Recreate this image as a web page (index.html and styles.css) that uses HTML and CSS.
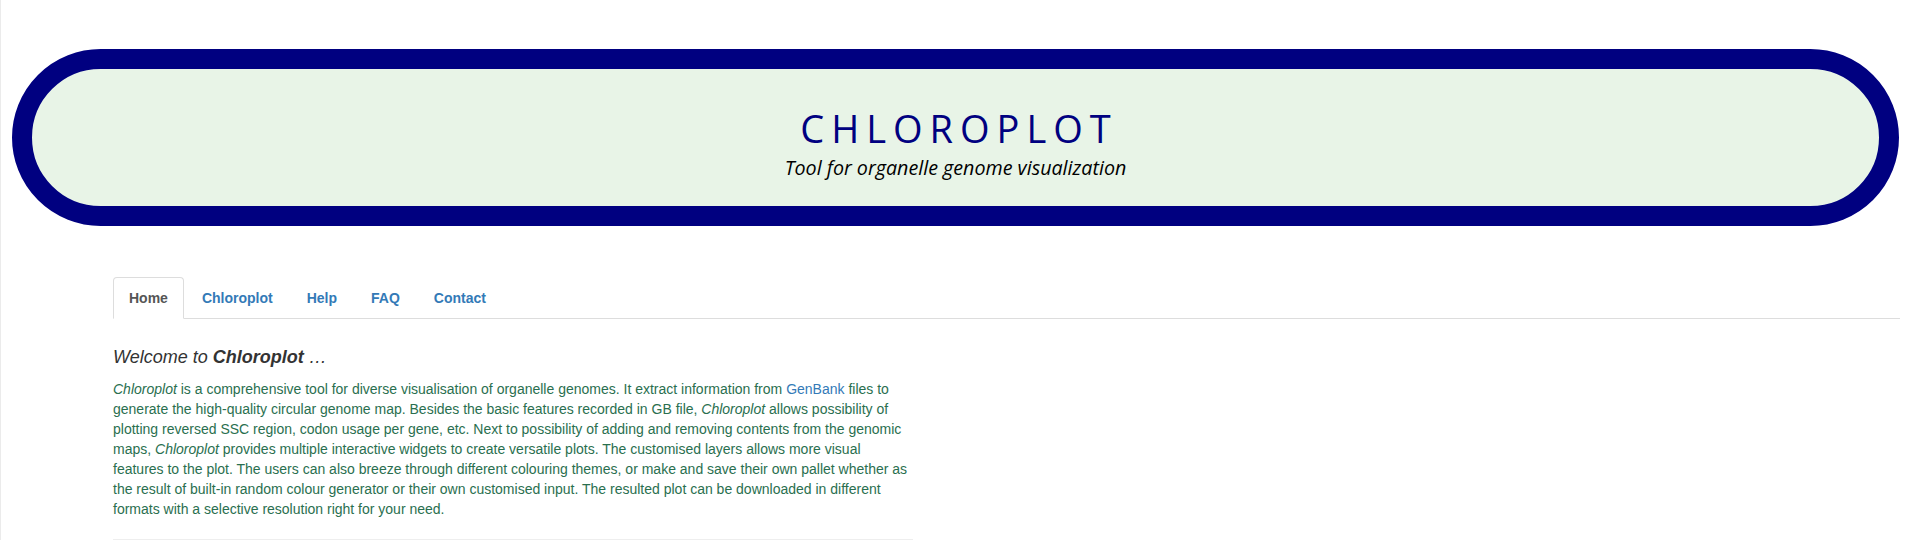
FILE: index.html
```html
<!DOCTYPE html>
<html lang="en">
<head>
<meta charset="utf-8">
<title>Chloroplot</title>
<link rel="stylesheet" href="styles.css">
</head>
<body>
<div class="page">
  <header class="banner-wrap">
    <div class="banner">
      <h1 class="title">CHLOROPLOT</h1>
      <p class="subtitle">Tool for organelle genome visualization</p>
    </div>
  </header>
  <div class="main">
    <ul class="nav-tabs">
      <li class="tab active"><a href="#">Home</a></li>
      <li class="tab"><a href="#">Chloroplot</a></li>
      <li class="tab"><a href="#">Help</a></li>
      <li class="tab"><a href="#">FAQ</a></li>
      <li class="tab"><a href="#">Contact</a></li>
    </ul>
    <div class="tab-content">
      <div class="col">
        <h4 class="welcome">Welcome to <b>Chloroplot</b> …</h4>
        <p class="intro"><i>Chloroplot</i> is a comprehensive tool for diverse visualisation of organelle genomes. It extract information from <a class="link" href="#">GenBank</a> files to generate the high-quality circular genome map. Besides the basic features recorded in GB file, <i>Chloroplot</i> allows possibility of plotting reversed SSC region, codon usage per gene, etc. Next to possibility of adding and removing contents from the genomic maps, <i>Chloroplot</i> provides multiple interactive widgets to create versatile plots. The customised layers allows more visual features to the plot. The users can also breeze through different colouring themes, or make and save their own pallet whether as the result of built-in random colour generator or their own customised input. The resulted plot can be downloaded in different formats with a selective resolution right for your need.</p>
        <hr class="rule">
      </div>
    </div>
  </div>
</div>
</body>
</html>
```

FILE: styles.css
```css
* {
  box-sizing: border-box;
}

html, body {
  margin: 0;
  padding: 0;
  background: #fff;
}

body {
  border-left: 1px solid #ebebeb;
  font-family: "Liberation Sans", Arial, Helvetica, sans-serif;
  font-size: 14px;
  line-height: 20px;
  color: #333;
  min-height: 540px;
}

.banner-wrap {
  padding: 49px 13px 0 11px;
}

.banner {
  box-sizing: content-box;
  border: 20px solid #000080;
  border-radius: 9999px;
  background: #e8f4e7;
  text-align: center;
  padding: 40px 0 0 0;
  height: 97px;
}

.title {
  margin: 0;
  font-family: "Open Sans", "Noto Sans", sans-serif;
  font-weight: 400;
  font-size: 38px;
  line-height: 38px;
  letter-spacing: 7px;
  padding-left: 7px;
  color: #000080;
}

.subtitle {
  margin: 11px 0 0 0;
  font-family: "Open Sans", "Noto Sans", sans-serif;
  font-style: italic;
  font-size: 19.7px;
  line-height: 20px;
  color: #000;
}

.main {
  padding: 51px 12px 0 112px;
}

.nav-tabs {
  display: flex;
  list-style: none;
  margin: 0;
  padding: 0;
  border-bottom: 1px solid #ddd;
}

.tab {
  margin-bottom: -1px;
}

.tab a {
  display: block;
  margin-right: 2px;
  padding: 10px 15px;
  border: 1px solid transparent;
  border-radius: 4px 4px 0 0;
  font-weight: bold;
  color: #337ab7;
  text-decoration: none;
}

.tab.active a {
  color: #555;
  background: #fff;
  border-color: #ddd;
  border-bottom-color: transparent;
}

.col {
  width: 800px;
}

.welcome {
  margin: 29px 0 11px 0;
  font-size: 18px;
  line-height: 19.8px;
  font-weight: 400;
  font-style: italic;
  color: #333;
}

.welcome b {
  font-weight: 700;
}

.intro {
  margin: 0 0 10px 0;
  color: #2a6f4f;
}

.link {
  color: #337ab7;
  text-decoration: none;
}

.rule {
  margin: 20px 0;
  border: 0;
  border-top: 1px solid #eee;
}
```
